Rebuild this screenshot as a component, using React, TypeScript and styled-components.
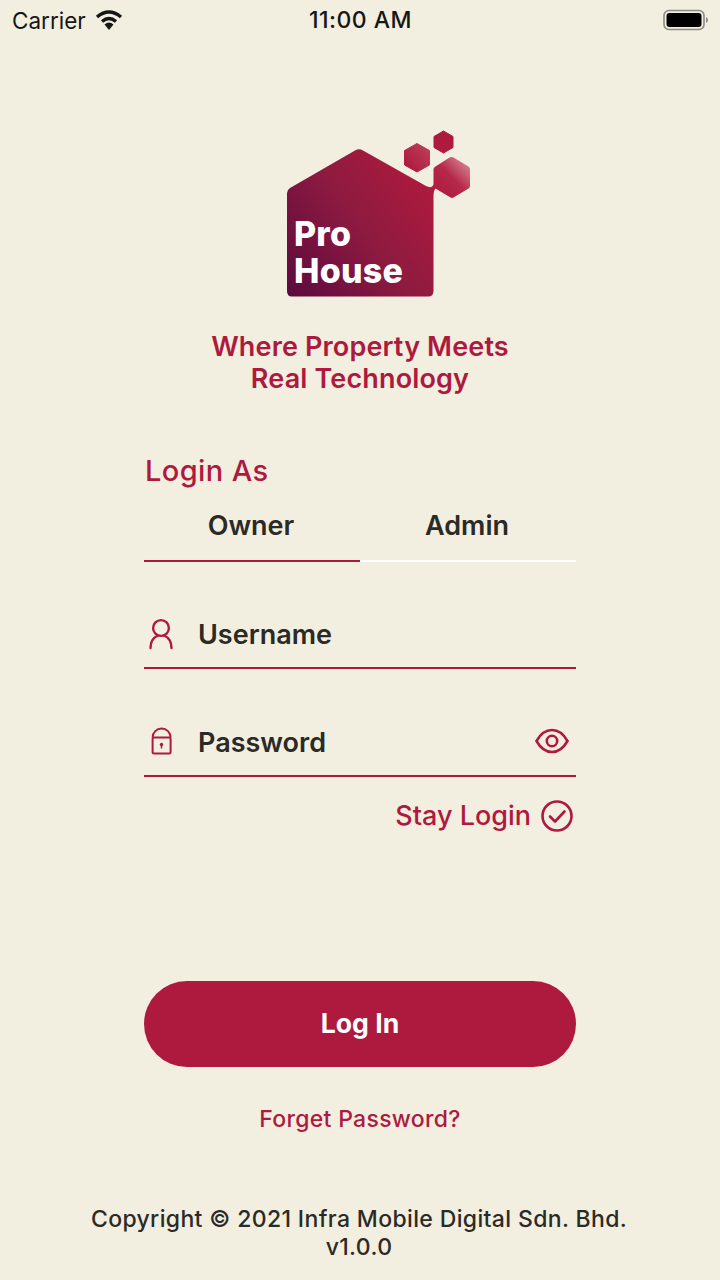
import React from 'react'
import styled, { createGlobalStyle } from 'styled-components'

const RED = '#ae1a3e'
const DARK = '#2b2a25'

const GlobalStyle = createGlobalStyle`
    html, body {
        margin: 0;
        padding: 0;
        background: #f2eee0;
    }
    * {
        box-sizing: border-box;
    }
`

const Page = styled.div`
    width: 720px;
    height: 1280px;
    display: flex;
    flex-direction: column;
    align-items: center;
    overflow: hidden;
    background: #f2eee0;
    font-family: Inter, 'Noto Sans', sans-serif;
`

const StatusBar = styled.div`
    width: 100%;
    height: 40px;
    flex: none;
    display: grid;
    grid-template-columns: 1fr auto 1fr;
    align-items: center;
    padding: 0 11px 0 12px;
    color: #161616;
    font-size: 22.5px;
`

const Carrier = styled.div`
    display: flex;
    align-items: center;
    gap: 9px;
`

const Clock = styled.div`
    font-size: 23px;
    font-weight: 500;
    letter-spacing: 0.5px;
`

const BatteryWrap = styled.div`
    display: flex;
    justify-content: flex-end;
`

const LogoWrap = styled.div`
    margin-top: 88px;
    margin-left: 38px;
    width: 190px;
    height: 172px;
    flex: none;
`

const LogoText = styled.text`
    font-family: Inter, sans-serif;
    font-weight: 800;
    font-size: 34px;
    letter-spacing: 0.2px;
    fill: #fff;
`

const Tagline = styled.div`
    margin-top: 31px;
    color: ${RED};
    font-size: 27px;
    font-weight: 600;
    line-height: 32px;
    letter-spacing: 0.15px;
    text-align: center;
`

const Form = styled.div`
    width: 432px;
    flex: none;
    display: flex;
    flex-direction: column;
`

const LoginAs = styled.div`
    margin-top: 59px;
    color: ${RED};
    font-size: 29px;
    font-weight: 500;
    line-height: 34px;
    letter-spacing: 0.4px;
    padding-left: 1px;
`

const Tabs = styled.div`
    margin-top: 20px;
    display: flex;
`

const Tab = styled.div<{ $active?: boolean }>`
    flex: 1;
    height: 54px;
    padding-right: 2px;
    color: ${DARK};
    font-size: 27px;
    font-weight: 600;
    line-height: 35px;
    text-align: center;
    border-bottom: 2px solid ${(props) => (props.$active ? RED : '#ffffff')};
`

const Field = styled.div<{ $first?: boolean }>`
    margin-top: ${(props) => (props.$first ? 45 : 46)}px;
    height: 62px;
    padding-bottom: 6px;
    display: flex;
    align-items: center;
    border-bottom: 2px solid ${RED};
    color: ${DARK};
    font-size: 27px;
    font-weight: 600;
`

const FieldIcon = styled.div`
    width: 54px;
    flex: none;
    display: flex;
    padding-left: 4px;
`

const FieldLabel = styled.div`
    flex: 1;
`

const EyeWrap = styled.div`
    display: flex;
    padding-right: 7px;
    margin-bottom: 3px;
`

const Stay = styled.div`
    margin-top: 22px;
    display: flex;
    justify-content: flex-end;
    align-items: center;
    gap: 10px;
    padding-right: 3px;
    color: ${RED};
    font-size: 27px;
    font-weight: 500;
    line-height: 34px;
`

const LoginButton = styled.button`
    margin-top: 148px;
    width: 100%;
    height: 86px;
    padding: 0 0 2px;
    border: none;
    border-radius: 43px;
    background: ${RED};
    color: #fff;
    font-family: inherit;
    font-size: 26.6px;
    font-weight: 700;
`

const Forget = styled.div`
    margin-top: 38px;
    color: ${RED};
    font-size: 23px;
    font-weight: 500;
    line-height: 28px;
    letter-spacing: 0.3px;
    text-align: center;
`

const Footer = styled.div`
    margin-top: 72px;
    margin-right: 2px;
    color: ${DARK};
    font-size: 23px;
    font-weight: 500;
    line-height: 28px;
    letter-spacing: 0.36px;
    text-align: center;
    white-space: nowrap;
`

const Logo = () => (
    <svg width="190" height="172" viewBox="284 128 190 172">
        <defs>
            <linearGradient id="house" x1="287" y1="296" x2="433" y2="190" gradientUnits="userSpaceOnUse">
                <stop offset="0" stopColor="#5c0a3f" />
                <stop offset="0.55" stopColor="#8d1a40" />
                <stop offset="1" stopColor="#ae1a3e" />
            </linearGradient>
            <linearGradient id="hexBig" x1="436" y1="195" x2="470" y2="162" gradientUnits="userSpaceOnUse">
                <stop offset="0" stopColor="#ae1a3e" />
                <stop offset="0.5" stopColor="#b52848" />
                <stop offset="1" stopColor="#d98c98" />
            </linearGradient>
            <linearGradient id="hexMid" x1="408" y1="168" x2="430" y2="148" gradientUnits="userSpaceOnUse">
                <stop offset="0" stopColor="#ae1a3e" />
                <stop offset="1" stopColor="#bb4058" />
            </linearGradient>
        </defs>
        <path
            d="M290 188 L355 150.500 Q359 148 363 150.500 L426 186 Q432 189 434 184 L436 188 Q433.500 190 433.500 196 L433.500 291 Q433.500 296.500 428 296.500 L292 296.500 Q287 296.500 287 291 L287 193 Q287 190 290 188 Z"
            fill="url(#house)"
        />
        <path
            d="M451.500 157 Q452.500 157 453.500 157.600 L468.500 166.500 Q470 167.500 470 169 L470 186 Q470 187.500 468.500 188.500 L453.500 197.500 Q452 198.300 450.500 197.500 L435.500 188.500 Q433.500 187.500 433.500 186 L433.500 169 Q433.500 167.500 435.500 166.500 L449.500 157.600 Q450.500 157 451.500 157 Z"
            fill="url(#hexBig)"
        />
        <path
            d="M417 143.500 L429.500 150.500 L429.500 165 L417 172 L404.500 165 L404.500 150.500 Z"
            fill="url(#hexMid)"
            stroke="url(#hexMid)"
            strokeLinejoin="round"
        />
        <path
            d="M443.500 131 L453 136.500 L453 147.500 L443.500 153 L434 147.500 L434 136.500 Z"
            fill="#ae1a3e"
            stroke="#ae1a3e"
            strokeLinejoin="round"
        />
        <LogoText x="294" y="246">Pro</LogoText>
        <LogoText x="294" y="283">House</LogoText>
    </svg>
)

const WifiIcon = () => (
    <svg width="28" height="22" viewBox="0 0 28 22">
        <path d="M2 8 Q14 -2 26 8" fill="none" stroke="#161616" strokeWidth="3.400" />
        <path d="M7 12.500 Q14 6.500 21 12.500" fill="none" stroke="#161616" strokeWidth="3.400" />
        <path d="M9.500 15.500 Q14 11.500 18.500 15.500 L14 21 Z" fill="#161616" />
    </svg>
)

const BatteryIcon = () => (
    <svg width="46" height="22" viewBox="0 0 46 22">
        <rect x="1" y="1.500" width="40" height="19" rx="5" fill="none" stroke="#8b8a84" strokeWidth="1.600" />
        <rect x="3.500" y="4" width="35" height="14" rx="3" fill="#000" />
        <path d="M43 8 Q45 9 45 11 Q45 13 43 14 Z" fill="#8b8a84" />
    </svg>
)

const UserIcon = () => (
    <svg width="26" height="32" viewBox="0 0 26 32" fill="none" stroke={RED} strokeWidth="2.400" strokeLinecap="round">
        <circle cx="13" cy="10" r="7.900" />
        <path d="M2.500 30 C2.500 23 6.500 19 10 17.500 M23.500 30 C23.500 23 19.500 19 16 17.500" />
    </svg>
)

const LockIcon = () => (
    <svg width="26" height="30" viewBox="0 0 26 30" fill="none" stroke={RED} strokeWidth="2">
        <path d="M4.600 10.500 A9 9 0 0 1 22.600 10.500" />
        <rect x="4.600" y="10.500" width="18" height="16" rx="1.500" />
        <circle cx="13.500" cy="17.500" r="1.700" fill={RED} stroke="none" />
        <path d="M13.500 17.500 L13.500 21.500" strokeWidth="1.500" />
    </svg>
)

const EyeIcon = () => (
    <svg width="34" height="26" viewBox="0 0 34 26" fill="none" stroke={RED} strokeWidth="2.600">
        <path d="M1.500 13 C6 5 11 2 17 2 C23 2 28 5 32.500 13 C28 21 23 24 17 24 C11 24 6 21 1.500 13 Z" />
        <circle cx="17" cy="13" r="5.200" />
    </svg>
)

const CheckIcon = () => (
    <svg width="32" height="32" viewBox="0 0 32 32" fill="none" stroke={RED} strokeWidth="2.600" strokeLinecap="round" strokeLinejoin="round">
        <circle cx="16" cy="16" r="14.500" />
        <path d="M9 16.500 L14 21.500 L23.500 11.500" />
    </svg>
)

export default function App() {
    return (
        <Page>
            <GlobalStyle />
            <StatusBar>
                <Carrier>
                    Carrier
                    <WifiIcon />
                </Carrier>
                <Clock>11:00 AM</Clock>
                <BatteryWrap>
                    <BatteryIcon />
                </BatteryWrap>
            </StatusBar>
            <LogoWrap>
                <Logo />
            </LogoWrap>
            <Tagline>
                Where Property Meets
                <br />
                Real Technology
            </Tagline>
            <Form>
                <LoginAs>Login As</LoginAs>
                <Tabs>
                    <Tab $active>Owner</Tab>
                    <Tab>Admin</Tab>
                </Tabs>
                <Field $first>
                    <FieldIcon>
                        <UserIcon />
                    </FieldIcon>
                    <FieldLabel>Username</FieldLabel>
                </Field>
                <Field>
                    <FieldIcon>
                        <LockIcon />
                    </FieldIcon>
                    <FieldLabel>Password</FieldLabel>
                    <EyeWrap>
                        <EyeIcon />
                    </EyeWrap>
                </Field>
                <Stay>
                    Stay Login
                    <CheckIcon />
                </Stay>
                <LoginButton>Log In</LoginButton>
                <Forget>Forget Password?</Forget>
            </Form>
            <Footer>
                Copyright © 2021 Infra Mobile Digital Sdn. Bhd.
                <br />
                v1.0.0
            </Footer>
        </Page>
    )
}
